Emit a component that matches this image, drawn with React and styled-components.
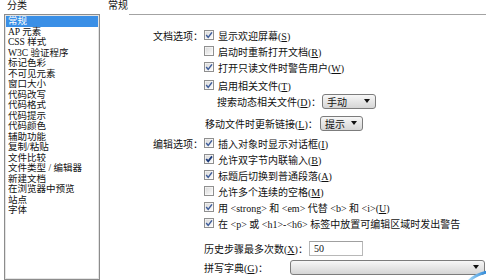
import React from 'react';
import styled, { createGlobalStyle } from 'styled-components';

const GlobalStyle = createGlobalStyle`
  html, body { margin: 0; padding: 0; background: #fff; }
  body {
    font-family: "Liberation Serif", "Noto Sans CJK SC", serif;
    font-size: 10px;
    color: #111;
  }
`;

const Window = styled.div`
  position: relative;
  width: 486px;
  height: 280px;
  overflow: hidden;
  display: flex;
  background: #fff;
`;

const Sidebar = styled.div`
  width: 101px;
  flex: none;
  display: flex;
  flex-direction: column;
`;

const Heading = styled.div`
  height: 14px;
  line-height: 11px;
  padding-left: ${p => p.$indent}px;
`;

const ListBox = styled.div`
  flex: 1;
  margin-left: 4px;
  width: 96px;
  box-sizing: border-box;
  border: 1px solid #8c8c8c;
  box-shadow: inset 0 0 0 1px #e4e4e4;
  padding: 1px;
  font-size: 9.5px;
`;

const ListItem = styled.div`
  height: 10.5px;
  line-height: 10.5px;
  padding-left: 2px;
  white-space: nowrap;
  background: ${p => (p.$selected ? '#3a8fe6' : 'transparent')};
  color: ${p => (p.$selected ? '#fff' : '#111')};
`;

const Main = styled.div`
  flex: 1;
  display: flex;
  flex-direction: column;
`;

const Rule = styled.div`
  height: 1px;
  background: #a3a3a3;
  margin-left: 28px;
`;

const Form = styled.div`
  padding-top: 12px;
  display: flex;
  flex-direction: column;
`;

const Row = styled.div`
  display: grid;
  grid-template-columns: 103px auto;
  align-items: center;
  height: 16px;
  margin-top: ${p => p.$gap || 0}px;
`;

const Label = styled.div`
  text-align: right;
  padding-right: 1px;
  white-space: nowrap;
`;

const Cell = styled.div`
  display: flex;
  align-items: center;
  gap: ${p => p.$gap ?? 4}px;
  padding-left: ${p => p.$indent || 0}px;
  white-space: nowrap;
`;

const FieldLabel = styled.span`
  flex: none;
  width: ${p => p.$w}px;
  white-space: nowrap;
`;

const Select = styled.div`
  box-sizing: border-box;
  width: ${p => p.$w}px;
  height: 15px;
  border: 1px solid #7c7c7c;
  border-radius: 3px;
  background: linear-gradient(#f7f7f7, #e6e6e6 50%, #d6d6d6);
  display: flex;
  align-items: center;
  padding: 0 5px 0 4px;
`;

const Arrow = styled.span`
  margin-left: auto;
  width: 0;
  height: 0;
  border-left: 3px solid transparent;
  border-right: 3px solid transparent;
  border-top: 4px solid #111;
`;

const TextInput = styled.div`
  box-sizing: border-box;
  width: ${p => p.$w}px;
  height: 15px;
  border: 1px solid #b8b8b8;
  border-top-color: #a0a0a0;
  background: #fff;
  display: flex;
  align-items: center;
  padding-left: 4px;
`;

const Corner = styled.svg`
  position: absolute;
  right: 0;
  bottom: 0;
`;

const Key = ({ k }) => (
  <span>(<u>{k}</u>)</span>
);

const Box = ({ checked, dark }) => (
  <svg width="10" height="10" viewBox="0 0 10 10" style={{ flex: 'none' }}>
    <defs>
      <linearGradient id="cbfill" x1="0" y1="0" x2="1" y2="1">
        <stop offset="0" stopColor="#d8d8d8" />
        <stop offset="1" stopColor="#fbfbfb" />
      </linearGradient>
    </defs>
    <rect x="0.5" y="0.5" width="9" height="9" fill="#fff" stroke="#8f8f8f" />
    <rect x="1.5" y="1.5" width="7" height="7" fill="url(#cbfill)" />
    {checked && (
      <path
        d="M2.2 5 L4.2 7.4 L8 2.4"
        fill="none"
        stroke={dark ? '#1d3b7a' : '#3d5c9a'}
        strokeWidth={dark ? 1.8 : 1.5}
      />
    )}
  </svg>
);

const Check = ({ checked, dark, children }) => (
  <Cell>
    <Box checked={checked} dark={dark} />
    <span>{children}</span>
  </Cell>
);

const categories = [
  '常规', 'AP 元素', 'CSS 样式', 'W3C 验证程序', '标记色彩', '不可见元素', '窗口大小',
  '代码改写', '代码格式', '代码提示', '代码颜色', '辅助功能', '复制/粘贴', '文件比较',
  '文件类型 / 编辑器', '新建文档', '在浏览器中预览', '站点', '字体',
];

export default function App() {
  return (
    <Window>
      <GlobalStyle />
      <Sidebar>
        <Heading $indent={7}>分类</Heading>
        <ListBox>
          {categories.map((c, i) => (
            <ListItem key={c} $selected={i === 0}>{c}</ListItem>
          ))}
        </ListBox>
      </Sidebar>
      <Main>
        <Heading $indent={7}>常规</Heading>
        <Rule />
        <Form>
          <Row>
            <Label>文档选项：</Label>
            <Check checked>显示欢迎屏幕<Key k="S" /></Check>
          </Row>
          <Row>
            <Label />
            <Check>启动时重新打开文档<Key k="R" /></Check>
          </Row>
          <Row>
            <Label />
            <Check checked>打开只读文件时警告用户<Key k="W" /></Check>
          </Row>
          <Row $gap={2}>
            <Label />
            <Check checked>启用相关文件<Key k="T" /></Check>
          </Row>
          <Row>
            <Label />
            <Cell $indent={13} $gap={0}>
              <FieldLabel $w={105}>搜索动态相关文件<Key k="D" />：</FieldLabel>
              <Select $w={54}>手动<Arrow /></Select>
            </Cell>
          </Row>
          <Row $gap={6}>
            <Label />
            <Cell $indent={1} $gap={0}>
              <FieldLabel $w={115}>移动文件时更新链接<Key k="L" />：</FieldLabel>
              <Select $w={43}>提示<Arrow /></Select>
            </Cell>
          </Row>
          <Row $gap={4}>
            <Label>编辑选项：</Label>
            <Check checked>插入对象时显示对话框<Key k="I" /></Check>
          </Row>
          <Row>
            <Label />
            <Check checked dark>允许双字节内联输入<Key k="B" /></Check>
          </Row>
          <Row>
            <Label />
            <Check checked>标题后切换到普通段落<Key k="A" /></Check>
          </Row>
          <Row>
            <Label />
            <Check>允许多个连续的空格<Key k="M" /></Check>
          </Row>
          <Row>
            <Label />
            <Check checked>用 &lt;strong&gt; 和 &lt;em&gt; 代替 &lt;b&gt; 和 &lt;i&gt;<Key k="U" /></Check>
          </Row>
          <Row>
            <Label />
            <Check checked>在 &lt;p&gt; 或 &lt;h1&gt;-&lt;h6&gt; 标签中放置可编辑区域时发出警告</Check>
          </Row>
          <Row $gap={9}>
            <Label />
            <Cell $gap={0}>
              <FieldLabel $w={105}>历史步骤最多次数<Key k="X" />：</FieldLabel>
              <TextInput $w={54}>50</TextInput>
            </Cell>
          </Row>
          <Row $gap={3}>
            <Label />
            <Cell $gap={0}>
              <FieldLabel $w={86}>拼写字典<Key k="G" />：</FieldLabel>
              <Select $w={195}><Arrow /></Select>
            </Cell>
          </Row>
        </Form>
      </Main>
      <Corner width="18" height="10" viewBox="0 0 18 10">
        <defs>
          <linearGradient id="arc" x1="0" y1="0" x2="1" y2="0">
            <stop offset="0" stopColor="#9fd4f5" />
            <stop offset="1" stopColor="#2a86d8" />
          </linearGradient>
        </defs>
        <path d="M1 11 Q8 4 19 2" fill="none" stroke="url(#arc)" strokeWidth="3" />
      </Corner>
    </Window>
  );
}
